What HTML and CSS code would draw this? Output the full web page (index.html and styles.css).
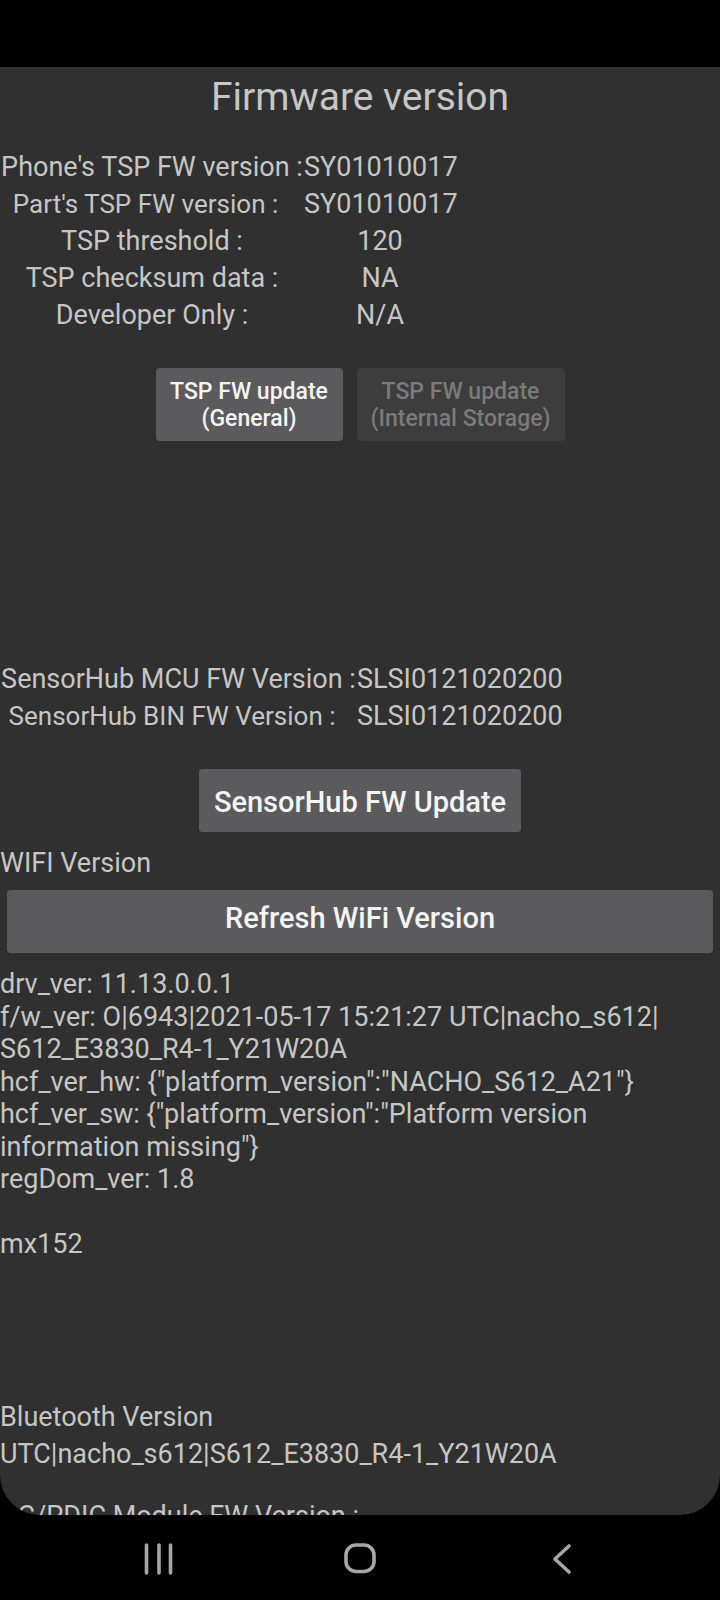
FILE: index.html
```html
<!DOCTYPE html>
<html>
<head>
<meta charset="utf-8">
<title>Firmware version</title>
<link rel="stylesheet" href="styles.css">
</head>
<body>
<div class="status"></div>
<main class="card">
  <h1 class="title">Firmware version</h1>

  <div class="table tsp">
    <span class="lbl">Phone's TSP FW version :</span><span class="val">SY01010017</span>
    <span class="lbl sm">Part's TSP FW version :  </span><span class="val">SY01010017</span>
    <span class="lbl">TSP threshold :</span><span class="val">120</span>
    <span class="lbl">TSP checksum data :</span><span class="val">NA</span>
    <span class="lbl">Developer Only :</span><span class="val">N/A</span>
  </div>

  <div class="btn-row">
    <button class="btn small">TSP FW update<br>(General)</button>
    <button class="btn small disabled">TSP FW update<br>(Internal Storage)</button>
  </div>

  <div class="table hub">
    <span class="lbl">SensorHub MCU FW Version :</span><span class="val">SLSI0121020200</span>
    <span class="lbl sm">SensorHub BIN FW Version :  </span><span class="val">SLSI0121020200</span>
  </div>

  <div class="center-row">
    <button class="btn big hub-btn">SensorHub FW Update</button>
  </div>

  <p class="line wifi-title">WIFI Version</p>
  <button class="btn big wide">Refresh WiFi Version</button>

  <div class="wifi">
    drv_ver: 11.13.0.0.1<br>
    f/w_ver: O|6943|2021-05-17 15:21:27 UTC|nacho_s612|<br>
    S612_E3830_R4-1_Y21W20A<br>
    hcf_ver_hw: {"platform_version":"NACHO_S612_A21"}<br>
    hcf_ver_sw: {"platform_version":"Platform version<br>
    information missing"}<br>
    regDom_ver: 1.8<br>
    <br>
    mx152
  </div>

  <p class="line bt">Bluetooth Version</p>
  <p class="line">UTC|nacho_s612|S612_E3830_R4-1_Y21W20A</p>
  <p class="line pdic">CC/PDIC Module FW Version :</p>
</main>
<nav class="nav">
  <span class="nav-slot">
    <svg width="40" height="40" viewBox="0 0 40 40"><path d="M7.5 6v28M20 6v28M31.5 6v28" stroke="#a6a6a6" stroke-width="3.6" stroke-linecap="round" fill="none"/></svg>
  </span>
  <span class="nav-slot">
    <svg width="40" height="40" viewBox="0 0 40 40"><rect x="6" y="6" width="28" height="26.5" rx="10" stroke="#a6a6a6" stroke-width="3.6" fill="none"/></svg>
  </span>
  <span class="nav-slot">
    <svg width="40" height="40" viewBox="0 0 40 40"><path d="M28 7 L14 20 L28 33" stroke="#a6a6a6" stroke-width="3.6" stroke-linecap="round" stroke-linejoin="round" fill="none"/></svg>
  </span>
</nav>
</body>
</html>
```

FILE: styles.css
```css
* { box-sizing: border-box; }
html, body { margin: 0; padding: 0; background: #000; }
body {
  width: 720px;
  height: 1600px;
  overflow: hidden;
  font-family: Roboto, "Noto Sans", sans-serif;
  color: #c6c6c6;
}
.status { height: 67px; background: #000; }
.card {
  height: 1448px;
  background: #303030;
  border-radius: 0 0 40px 40px;
  overflow: hidden;
  display: flex;
  flex-direction: column;
  align-items: flex-start;
}
.title {
  align-self: stretch;
  margin: 7px 0 0;
  font-size: 39px;
  font-weight: 400;
  line-height: 46px;
  text-align: center;
  color: #c6c6c6;
}
.table {
  display: grid;
  font-size: 27px;
  line-height: 37px;
  text-align: center;
  white-space: pre;
}
.table .sm { font-size: 26px; }
.tsp { margin-top: 29px; grid-template-columns: 304px 152px; }
.hub { margin-top: 220px; grid-template-columns: 357px 203px; }
.btn-row {
  align-self: stretch;
  display: flex;
  justify-content: center;
  gap: 14px;
  margin-top: 34px;
}
.btn {
  font-family: Roboto, "Noto Sans", sans-serif;
  font-weight: 500;
  border: none;
  border-radius: 4px;
  background: #5b5b5d;
  color: #f4f4f4;
  padding: 0;
}
.btn.small {
  height: 73px;
  font-size: 23px;
  line-height: 27px;
  padding: 0 8px;
}
.btn.small:first-child { width: 187px; }
.btn.disabled { width: 208px; background: #3d3d3d; color: #7a7a7a; }
.center-row {
  align-self: stretch;
  display: flex;
  justify-content: center;
  margin-top: 34px;
}
.btn.big {
  font-size: 29px;
  line-height: 34px;
}
.hub-btn {
  width: 322px;
  height: 63px;
  padding-top: 16px;
  padding-bottom: 13px;
}
.line {
  margin: 0;
  font-size: 27px;
  line-height: 37px;
  white-space: nowrap;
}
.wifi-title { margin-top: 13px; }
.wide {
  align-self: stretch;
  margin: 8px 7px 0;
  height: 63px;
  padding-top: 11px;
  padding-bottom: 18px;
}
.wifi {
  margin-top: 15px;
  font-size: 27px;
  line-height: 32.5px;
  white-space: nowrap;
}
.bt { margin-top: 138px; }
.pdic { margin-top: 25px; }
.nav {
  height: 85px;
  background: #000;
  display: flex;
  justify-content: center;
  align-items: center;
  gap: 161px;
  padding-top: 3px;
}
.nav-slot { width: 40px; height: 40px; display: flex; }
```
